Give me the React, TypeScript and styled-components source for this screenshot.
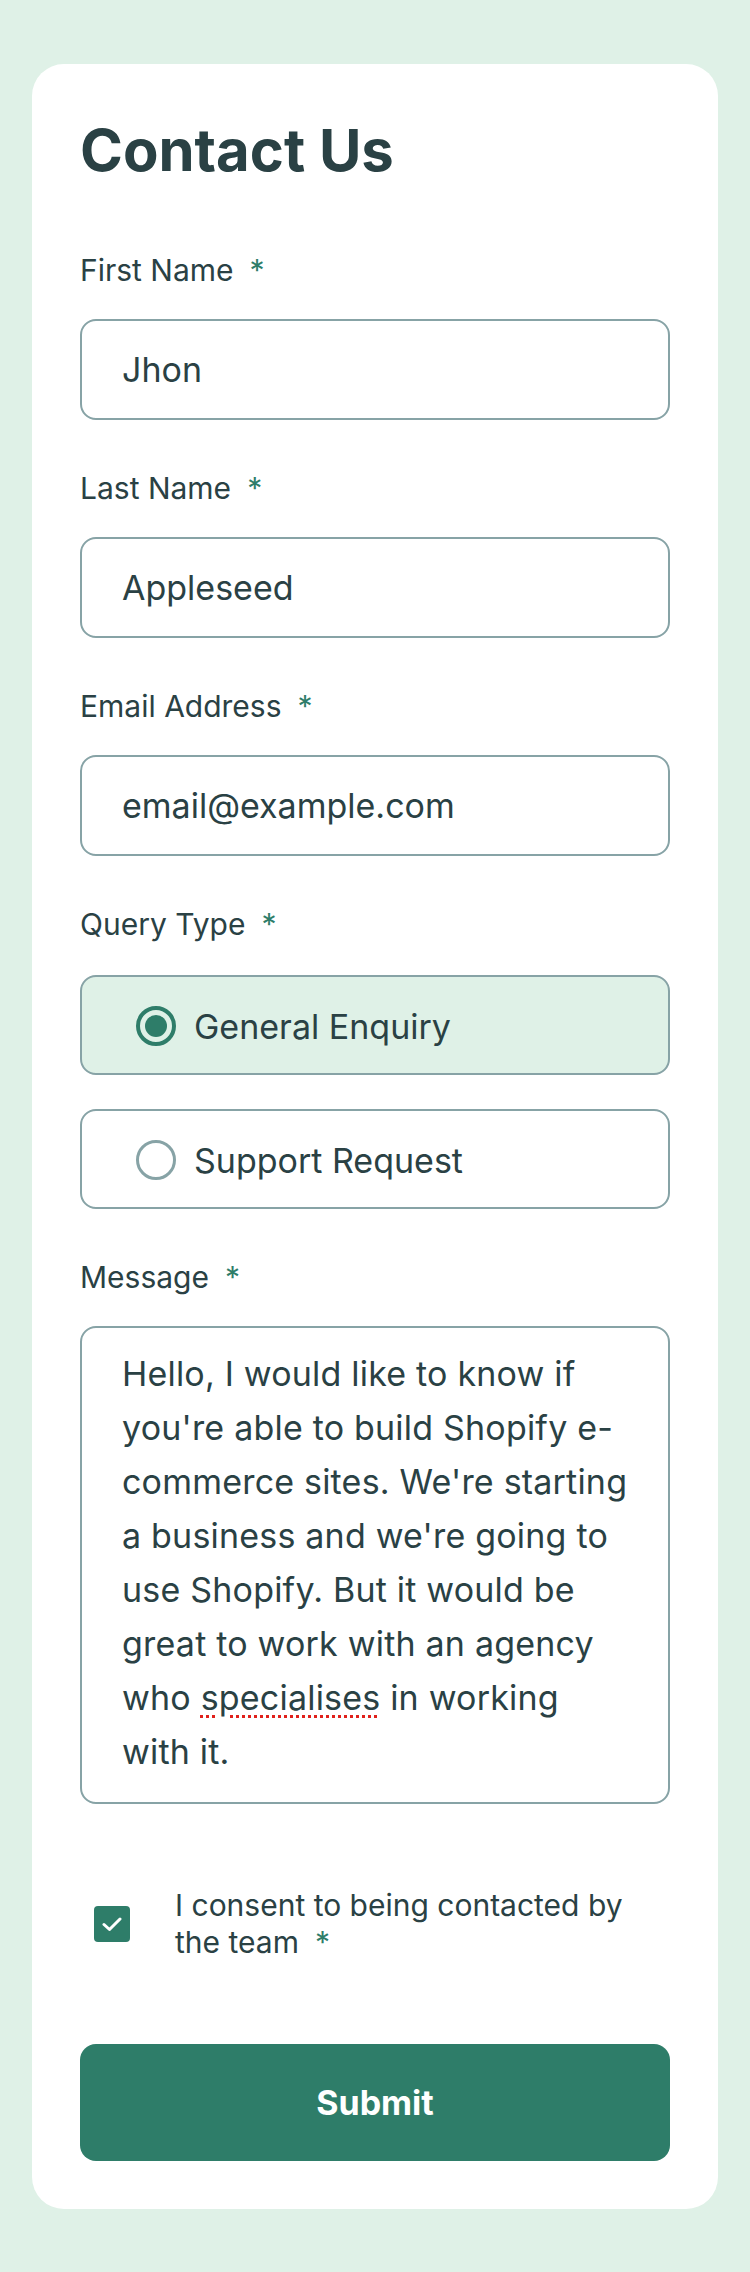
import React, { useState } from "react";
import styled, { createGlobalStyle } from "styled-components";

const FONT = `"Inter", "Open Sans", "Noto Sans", sans-serif`;
const DARK = "#2a4144";
const GREEN = "#2e7d69";
const GREY = "#87a3a6";
const MINT = "#dff1e7";

const GlobalStyle = createGlobalStyle`
  * { box-sizing: border-box; }
  html, body { margin: 0; padding: 0; }
  body {
    background: ${MINT};
    font-family: ${FONT};
    color: ${DARK};
  }
`;

const Page = styled.main`
  padding: 64px 32px 65px;
`;

const Card = styled.form`
  background: #ffffff;
  border-radius: 32px;
  padding: 54px 48px 48px;
  display: flex;
  flex-direction: column;
`;

const Title = styled.h1`
  margin: 0 0 70px;
  font-size: 58px;
  line-height: 64px;
  font-weight: 700;
  letter-spacing: 0;
  color: ${DARK};
`;

const Fields = styled.div`
  display: flex;
  flex-direction: column;
  gap: 50px;
`;

const Field = styled.div`
  display: flex;
  flex-direction: column;
  gap: 31px;
`;

const Label = styled.label`
  font-size: 30px;
  line-height: 36px;
  font-weight: 400;
  color: ${DARK};
`;

const Star = styled.span`
  color: ${GREEN};
  margin-left: 16px;
`;

const TextInput = styled.input`
  height: 101px;
  width: 100%;
  border: 2px solid ${GREY};
  border-radius: 16px;
  padding: 0 40px;
  font: inherit;
  font-size: 34px;
  color: ${DARK};
  background: #fff;
  outline: none;
`;

const RadioGroup = styled.div`
  display: flex;
  flex-direction: column;
  gap: 34px;
  padding-top: 2px;
`;

const RadioOption = styled.label<{ $checked: boolean }>`
  height: 100px;
  border: 2px solid ${GREY};
  border-radius: 16px;
  background: ${(p) => (p.$checked ? MINT : "#fff")};
  display: flex;
  align-items: center;
  gap: 18px;
  padding: 2px 0 0 54px;
  font-size: 34px;
  color: ${DARK};
  cursor: pointer;
  input { position: absolute; opacity: 0; width: 0; height: 0; }
`;

const RadioCircle = styled.span<{ $checked: boolean }>`
  width: 40px;
  height: 40px;
  border-radius: 50%;
  border: ${(p) => (p.$checked ? `4px solid ${GREEN}` : `3px solid ${GREY}`)};
  display: flex;
  align-items: center;
  justify-content: center;
  flex-shrink: 0;
  &::after {
    content: "";
    width: 22px;
    height: 22px;
    border-radius: 50%;
    background: ${GREEN};
    display: ${(p) => (p.$checked ? "block" : "none")};
  }
`;

const MessageBox = styled.div`
  height: 478px;
  border: 2px solid ${GREY};
  border-radius: 16px;
  padding: 19px 38px 0 40px;
  font-size: 34px;
  line-height: 54px;
  letter-spacing: 0.2px;
  color: ${DARK};
  outline: none;
  overflow: hidden;
`;

const Misspelled = styled.span`
  text-decoration: underline dotted #e0201b;
  text-decoration-thickness: 3px;
  text-underline-offset: 5px;
`;

const ConsentRow = styled.label`
  display: flex;
  align-items: center;
  gap: 45px;
  padding: 83px 0 83px 14px;
  cursor: pointer;
  input { position: absolute; opacity: 0; width: 0; height: 0; }
`;

const CheckBox = styled.span<{ $checked: boolean }>`
  width: 36px;
  height: 36px;
  border-radius: 4px;
  flex-shrink: 0;
  background: ${(p) => (p.$checked ? GREEN : "#fff")};
  border: ${(p) => (p.$checked ? "none" : `2px solid ${GREY}`)};
  display: flex;
  align-items: center;
  justify-content: center;
`;

const ConsentText = styled.span`
  font-size: 30px;
  line-height: 37px;
  color: ${DARK};
`;

const SubmitButton = styled.button`
  height: 117px;
  width: 100%;
  border: none;
  border-radius: 16px;
  background: ${GREEN};
  color: #fff;
  font: inherit;
  font-size: 34px;
  font-weight: 700;
  cursor: pointer;
`;

export default function App() {
  const [query, setQuery] = useState("general");
  const [consent, setConsent] = useState(true);

  return (
    <>
      <GlobalStyle />
      <Page>
        <Card onSubmit={(e) => e.preventDefault()} noValidate>
          <Title>Contact Us</Title>
          <Fields>
            <Field>
              <Label htmlFor="first">
                First Name<Star>*</Star>
              </Label>
              <TextInput id="first" defaultValue="Jhon" />
            </Field>
            <Field>
              <Label htmlFor="last">
                Last Name<Star>*</Star>
              </Label>
              <TextInput id="last" defaultValue="Appleseed" />
            </Field>
            <Field>
              <Label htmlFor="email">
                Email Address<Star>*</Star>
              </Label>
              <TextInput id="email" type="email" defaultValue="email@example.com" />
            </Field>
            <Field>
              <Label as="span">
                Query Type<Star>*</Star>
              </Label>
              <RadioGroup role="radiogroup">
                <RadioOption $checked={query === "general"}>
                  <input
                    type="radio"
                    name="query"
                    checked={query === "general"}
                    onChange={() => setQuery("general")}
                  />
                  <RadioCircle $checked={query === "general"} />
                  General Enquiry
                </RadioOption>
                <RadioOption $checked={query === "support"}>
                  <input
                    type="radio"
                    name="query"
                    checked={query === "support"}
                    onChange={() => setQuery("support")}
                  />
                  <RadioCircle $checked={query === "support"} />
                  Support Request
                </RadioOption>
              </RadioGroup>
            </Field>
            <Field>
              <Label as="span">
                Message<Star>*</Star>
              </Label>
              <MessageBox role="textbox" aria-multiline="true" contentEditable suppressContentEditableWarning>
                Hello, I would like to know if you're able to build Shopify e-commerce sites. We're
                starting a business and we're going to use Shopify. But it would be great to work
                with an agency who <Misspelled>specialises</Misspelled> in working with it.
              </MessageBox>
            </Field>
          </Fields>
          <ConsentRow>
            <input type="checkbox" checked={consent} onChange={(e) => setConsent(e.target.checked)} />
            <CheckBox $checked={consent}>
              {consent && (
                <svg width="20" height="15" viewBox="0 0 20 15" fill="none">
                  <path d="M2 7.5 L7.5 12.5 L18 2" stroke="#fff" strokeWidth="3" strokeLinecap="round" strokeLinejoin="round" />
                </svg>
              )}
            </CheckBox>
            <ConsentText>
              I consent to being contacted by the team<Star>*</Star>
            </ConsentText>
          </ConsentRow>
          <SubmitButton type="submit">Submit</SubmitButton>
        </Card>
      </Page>
    </>
  );
}
